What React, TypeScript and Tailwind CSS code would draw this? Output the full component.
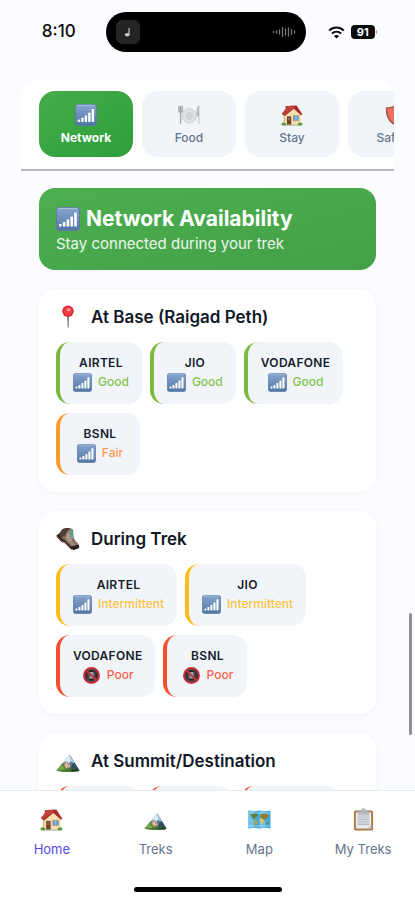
import { useState } from 'react'
import type { ComponentType } from 'react'
import clsx from 'clsx'

interface IconProps {
  className?: string
}

function SignalIcon({ className }: IconProps) {
  return (
    <svg viewBox="0 0 24 24" className={className} aria-hidden="true">
      <defs>
        <linearGradient id="signal-bg" x1="0" y1="0" x2="0" y2="1">
          <stop offset="0" stopColor="#87a5d0" />
          <stop offset="0.5" stopColor="#6c8fba" />
          <stop offset="1" stopColor="#4f76a3" />
        </linearGradient>
      </defs>
      <rect x="0.5" y="0.5" width="23" height="23" rx="3" fill="url(#signal-bg)" stroke="#5d7ba6" />
      <path d="M2.5 1.4h19" stroke="#b9cde8" strokeWidth="0.8" />
      <g fill="#fff">
        <rect x="3" y="17" width="2.6" height="2.5" rx="0.6" />
        <rect x="6.8" y="15" width="2.6" height="4.5" rx="0.6" />
        <rect x="10.6" y="12.5" width="2.6" height="7" rx="0.6" />
        <rect x="14.4" y="9.5" width="2.6" height="10" rx="0.6" />
        <rect x="18.2" y="5.5" width="2.6" height="14" rx="0.6" />
      </g>
    </svg>
  )
}

function PlateIcon({ className }: IconProps) {
  return (
    <svg viewBox="0 0 24 24" className={className} aria-hidden="true">
      <circle cx="12.5" cy="12.8" r="8" fill="#dcdfe2" stroke="#c9cdd1" strokeWidth="0.7" />
      <circle cx="12.5" cy="12.8" r="5.2" fill="#d1d4d8" stroke="#e9ebed" strokeWidth="0.8" />
      <path d="M1 2v6.5h3.6V2M2.8 2v19.5" fill="none" stroke="#a5a8ab" strokeWidth="1.5" />
      <path d="M22.8 21.5V2c-2 1.5-2.5 6-2 10.5h2" fill="#c1c4c7" stroke="#a9acaf" strokeWidth="0.8" />
    </svg>
  )
}

function HouseIcon({ className }: IconProps) {
  return (
    <svg viewBox="0 0 24 24" className={className} aria-hidden="true">
      <path d="M5 2.2h3.5v5H5z" fill="#9c4436" />
      <path d="M3 11.5 9.5 5l4-1.5 8 8.500v10.5H3z" fill="#f5dfb1" />
      <path d="M3 12v10.5h1.6V12z" fill="#d9b984" />
      <path d="M.8 10.8 7.6 2.2 17 1.6l6.3 9.6-1.5 1L14 5.2 4.200 13z" fill="#a92b2b" />
      <path d="m7.6 2.2-6 8 2 1.4L14 4.3l-.8-2.4z" fill="#c24337" />
      <rect x="6.5" y="13.5" width="4.6" height="9" fill="#70402d" />
      <rect x="7.7" y="14.8" width="2.2" height="3" fill="#a46b4b" />
      <rect x="13.4" y="12.7" width="6" height="5.6" fill="#5aa3dc" stroke="#c29164" strokeWidth="0.8" />
      <path d="M16.4 12.7v5.6" stroke="#cde4f3" strokeWidth="0.6" />
      <ellipse cx="3" cy="21.8" rx="2.6" ry="1.7" fill="#5d9b3c" />
      <ellipse cx="21" cy="21.8" rx="2.6" ry="1.7" fill="#5d9b3c" />
      <path d="M3 23h18" stroke="#81905c" strokeWidth="0.8" />
    </svg>
  )
}

function ShieldIcon({ className }: IconProps) {
  return (
    <svg viewBox="0 0 24 24" className={className} aria-hidden="true">
      <path d="M12 1c3 2 6 2.5 10 2.5C22.5 12 20 19.5 12 23.5 4 19.5 1.500 12 2 3.5 6 3.5 9 3 12 1z" fill="#a8584e" />
      <path d="M12 3.2c2.5 1.5 5 2 8 2.1.1 6.7-2 12.7-8 16-6-3.3-8.1-9.3-8-16 3-.1 5.500-.6 8-2.1z" fill="#ee6557" />
      <path d="M12 3.2v18.1c-6-3.3-8.1-9.3-8-16 3-.1 5.500-.6 8-2.1z" fill="#f2705f" />
    </svg>
  )
}

function PinIcon({ className }: IconProps) {
  return (
    <svg viewBox="0 0 24 24" className={className} aria-hidden="true">
      <path d="M11.1 9h2l-.5 13.5h-1z" fill="#807b82" />
      <circle cx="12" cy="6.3" r="5.7" fill="#d92332" />
      <circle cx="12" cy="6.3" r="4.2" fill="#ee3d43" />
      <ellipse cx="12.8" cy="4.8" rx="2" ry="1.5" fill="#ff9d96" />
    </svg>
  )
}

function BootIcon({ className }: IconProps) {
  return (
    <svg viewBox="0 0 24 24" className={className} aria-hidden="true">
      <path d="M1 8C4 7 5 3 7.500 1.800 10 .6 14 1 17 2.500c.6 3.500.2 6.500 1.200 9.500 1.500 3 4.300 4 4.800 6.500l-.5 2.500-5 1.500c-3-1-4.500-3.500-6-5.500C9.500 14.500 8 14 6 13z" fill="#846c5e" />
      <path d="M1 8C4 7 5 3 7.500 1.800 9.500.9 12 .8 14 1.300 12 3 10.500 5.500 9.500 8L5 11z" fill="#4d3f38" />
      <path d="M10 9c1-3 2.500-5.500 4-6.500l.8 9.500 4.700 5.500-2 1.500c-3-1.500-5-4-7.500-6z" fill="#a18877" />
      <path d="M14 3.200 16.500 3l1 8.500-2 .8z" fill="#4fae9f" />
      <path d="m10.800 7.500 3.400 1M10.500 10.500l4.500.3M12 13.500l4-1" stroke="#d8c0aa" strokeWidth="0.8" />
      <path d="M.7 8 2.500 7.500 6.500 12l2.700 1.500 5.600 6 7.900-1.800.6 3.300-5.300 2-3-.7-6.500-6.500-3-.8L.7 10z" fill="#2a2423" />
      <path d="m1.200 9.300 4.600 5 3 .8 5.200 6.100" fill="none" stroke="#be5843" strokeWidth="0.8" />
    </svg>
  )
}

function MountainIcon({ className }: IconProps) {
  return (
    <svg viewBox="0 0 24 24" className={className} aria-hidden="true">
      <path d="M4 18 13.5 5.5l10 16H4z" fill="#557c99" />
      <path d="m13.5 5.5-6 8 3.5-1 1.8 2 2-2.5 3 2.5 1.500-.3z" fill="#dcebf3" />
      <path d="m13.5 5.5 10 16H14l2.5-7z" fill="#334f63" />
      <path d="m13.5 5.5 5.2 8.3-2.2.2-1.5-2z" fill="#a5c9dc" />
      <path d="m5 19.5 5.500-7.500 3 3 1.500 5.5z" fill="#b99475" />
      <path d="m9 16 1.7-3 1.300 4-1.500 2zM13 15l1.8 5-2.3-.5z" fill="#e5c4a4" />
      <path d="m.5 21.500 6-7.500 3.5 6 4-2 3 2.5 3-2 3.500 3.500C18 23.500 6 23.500.5 21.500z" fill="#477734" />
      <path d="m.8 21.300 5.500-6.500 2.500 6z" fill="#74a548" />
      <path d="m14 22 2-2 2 1 2-2 3.500 2.800c-3 .8-6 .9-9.500.2z" fill="#233d2e" />
    </svg>
  )
}

function MapIcon({ className }: IconProps) {
  return (
    <svg viewBox="0 0 24 24" className={className} aria-hidden="true">
      <path d="m.5 2.500 5.700 1L12 2.500l5.800 1 5.700-1v19l-5.700-1-5.800 1-5.800-1-5.700 1z" fill="#45a9dc" />
      <path d="m.5 2.500 5.700 1v17l-5.700 1zM12 2.500l5.800 1v17l-5.800 1z" fill="#6cc2e8" />
      <path d="M1.500 5.200h21M1.500 18.800h21" stroke="#a9dff2" strokeWidth="0.8" />
      <path d="m2.500 6.500 4.500-.8 3.500.8-1 2.500-2 1.200-.8 1.800-2-1-1.200-2.500z" fill="#5f8038" />
      <path d="m7 12 3 1.300-.6 3-1.600 2.700-1-3z" fill="#c39a3d" />
      <path d="m12.500 7.500 2-1.800 4 .4 3 1-.5 3-2.500 1-1.500 2-1.500-2-2-.4-1-1.500z" fill="#8f7f30" />
      <path d="m12 11.500 3-.3 1.500 1.500-1.300 4-1.200.8-1-3.500z" fill="#e8c84f" />
      <path d="m19 15.500 2.300-.7.5 2-2.200.5z" fill="#5b8d44" />
    </svg>
  )
}

function ClipboardIcon({ className }: IconProps) {
  return (
    <svg viewBox="0 0 24 24" className={className} aria-hidden="true">
      <rect x="2" y="2.5" width="20" height="21" rx="1.8" fill="#a97b43" />
      <path d="M4 4.500h16v17H4z" fill="#e6e9ec" />
      <path d="M5.800 7h12.400M5.800 9.500h12.400M5.800 12h12.400M5.800 14.500h12.400M5.800 17h12.400" stroke="#b8bcc2" strokeWidth="1.4" />
      <path d="M16 21.500h4v-4z" fill="#c5c9ce" />
      <path d="M7 5.500V3.200h2.800c.2-3.600 4.200-3.600 4.400 0H17v2.300z" fill="#b2b7bd" stroke="#91979e" strokeWidth="0.5" />
    </svg>
  )
}

function NoPhoneIcon({ className }: IconProps) {
  return (
    <svg viewBox="0 0 24 24" className={className} aria-hidden="true">
      <circle cx="12" cy="12" r="9.500" fill="#3c3335" stroke="#cc2f35" strokeWidth="2.4" />
      <rect x="8" y="5" width="8" height="14" rx="1.5" fill="#1e2126" stroke="#777b80" strokeWidth="0.7" />
      <path d="M9.300 7.500h5.400v8.500H9.300z" fill="#9aa1a8" />
      <path d="m5.500 5.500 13 13" stroke="#cc2f35" strokeWidth="2.2" />
    </svg>
  )
}

function WifiIcon({ className }: IconProps) {
  return (
    <svg viewBox="0 0 17 13" className={className} aria-hidden="true">
      <path d="M1.200 4.600c4.200-4 10.400-4 14.600 0M3.900 7.600c2.700-2.500 6.500-2.500 9.200 0" fill="none" stroke="#0b0b0d" strokeWidth="2" />
      <path d="M8.500 12.500 5.900 9.900c1.500-1.300 3.700-1.300 5.200 0z" fill="#0b0b0d" />
    </svg>
  )
}

const CATEGORIES: { label: string; Icon: ComponentType<IconProps> }[] = [
  { label: 'Network', Icon: SignalIcon },
  { label: 'Food', Icon: PlateIcon },
  { label: 'Stay', Icon: HouseIcon },
  { label: 'Safety', Icon: ShieldIcon },
]

type Quality = 'Good' | 'Fair' | 'Intermittent' | 'Poor'

const QUALITY_STYLES: Record<Quality, { border: string; text: string }> = {
  Good: { border: 'border-[#7cb93e]', text: 'text-[#82c44c]' },
  Fair: { border: 'border-[#ff9a2e]', text: 'text-[#ff9a4d]' },
  Intermittent: { border: 'border-[#fbbc1c]', text: 'text-[#fbc244]' },
  Poor: { border: 'border-[#f4502c]', text: 'text-[#f9604a]' },
}

interface Spot {
  title: string
  Icon: ComponentType<IconProps>
  carriers: { name: string; quality: Quality }[]
}

const SPOTS: Spot[] = [
  {
    title: 'At Base (Raigad Peth)',
    Icon: PinIcon,
    carriers: [
      { name: 'AIRTEL', quality: 'Good' },
      { name: 'JIO', quality: 'Good' },
      { name: 'VODAFONE', quality: 'Good' },
      { name: 'BSNL', quality: 'Fair' },
    ],
  },
  {
    title: 'During Trek',
    Icon: BootIcon,
    carriers: [
      { name: 'AIRTEL', quality: 'Intermittent' },
      { name: 'JIO', quality: 'Intermittent' },
      { name: 'VODAFONE', quality: 'Poor' },
      { name: 'BSNL', quality: 'Poor' },
    ],
  },
  {
    title: 'At Summit/Destination',
    Icon: MountainIcon,
    carriers: [
      { name: 'AIRTEL', quality: 'Poor' },
      { name: 'JIO', quality: 'Poor' },
      { name: 'VODAFONE', quality: 'Poor' },
    ],
  },
]

const NAV_ITEMS: { label: string; href: string; Icon: ComponentType<IconProps> }[] = [
  { label: 'Home', href: '#home', Icon: HouseIcon },
  { label: 'Treks', href: '#treks', Icon: MountainIcon },
  { label: 'Map', href: '#map', Icon: MapIcon },
  { label: 'My Treks', href: '#my-treks', Icon: ClipboardIcon },
]

function StatusBar() {
  return (
    <header className="flex shrink-0 items-center pt-3 pr-4 pb-7 pl-3">
      <div className="flex-1 text-center text-[17px] font-medium text-[#0b0b0d]">8:10</div>
      <div className="flex h-10 w-[200px] items-center justify-between rounded-full bg-black px-[10px]">
        <div className="flex size-6 items-center justify-center rounded-md bg-[#242424]">
          <svg viewBox="0 0 10 14" className="h-3 w-2" aria-hidden="true">
            <ellipse cx="4" cy="10.5" rx="3" ry="2.2" fill="#c9c9c9" />
            <path d="M6.300 10.500V2" stroke="#c9c9c9" strokeWidth="1.5" />
          </svg>
        </div>
        <svg viewBox="0 0 24 12" className="h-3 w-6" aria-hidden="true">
          <path
            d="M1.500 5.500v1M4.500 5v2M7.500 4v4M10.500 1.500v9M13.500 3v6M16.500 2v8M19.500 3.500v5M22.500 5v2"
            stroke="#77777a"
            strokeWidth="1.3"
            strokeLinecap="round"
          />
        </svg>
      </div>
      <div className="flex flex-1 items-center justify-center gap-1.5">
        <WifiIcon className="h-[13px] w-[17px]" />
        <div className="flex items-center gap-px">
          <span className="flex h-[14px] w-6 items-center justify-center rounded bg-[#0b0b0d] text-[11px] font-bold text-white">
            91
          </span>
          <span className="h-1 w-px rounded-r bg-gray-400" />
        </div>
      </div>
    </header>
  )
}

function CarrierChip({ name, quality }: { name: string; quality: Quality }) {
  const { border, text } = QUALITY_STYLES[quality]
  const Icon = quality === 'Poor' ? NoPhoneIcon : SignalIcon

  return (
    <li
      className={clsx(
        'flex min-w-[84px] flex-col items-center rounded-[14px] border-l-4 bg-[#f1f5f9] px-[13px] py-3',
        border
      )}
    >
      <span className="text-xs leading-[18px] font-semibold tracking-wide text-[#141b2c]">{name}</span>
      <span className="flex items-center gap-1.5">
        <Icon className="size-[19px]" />
        <span className={clsx('text-xs leading-5 font-medium', text)}>{quality}</span>
      </span>
    </li>
  )
}

function SpotCard({ title, Icon, carriers }: Spot) {
  return (
    <section className="rounded-2xl bg-white px-[17px] pt-4 pb-[17px] shadow-[0_1px_6px_rgba(15,23,42,0.04)]">
      <h2 className="flex items-center gap-[11px] text-[17px] leading-[22px] font-semibold text-[#111827]">
        <Icon className="size-6" />
        {title}
      </h2>
      <ul className="mt-[13px] flex flex-wrap gap-x-2 gap-y-[9px]">
        {carriers.map(c => (
          <CarrierChip key={c.name} {...c} />
        ))}
      </ul>
    </section>
  )
}

export default function App() {
  const [category, setCategory] = useState('Network')

  return (
    <div className="relative flex h-screen flex-col overflow-hidden bg-[#fbfcff] font-['Inter',sans-serif]">
      <StatusBar />

      <main className="mx-[21px] flex min-h-0 flex-1 flex-col">
        {/* Category tabs, scroll sideways */}
        <div className="flex shrink-0 gap-[9px] overflow-x-auto rounded-t-2xl border-b-2 border-[#b8b8ba] bg-white px-[18px] pt-[11px] pb-3 [scrollbar-width:none]">
          {CATEGORIES.map(({ label, Icon }) => (
            <button
              key={label}
              onClick={() => setCategory(label)}
              className={clsx(
                'flex h-[66px] w-[94px] shrink-0 cursor-pointer flex-col items-center justify-center gap-1 rounded-2xl pt-0.5 text-xs leading-4',
                category === label
                  ? 'bg-linear-to-br from-[#43ad48] to-[#2f9e3b] font-bold text-white'
                  : 'bg-[#f1f5f9] font-medium text-[#64748b]'
              )}
            >
              <Icon className="size-[22px]" />
              {label}
            </button>
          ))}
        </div>

        <div className="flex min-h-0 flex-1 flex-col gap-[19px] overflow-y-auto px-[18px] pt-[17px] [scrollbar-width:none] *:shrink-0">
          <div className="rounded-2xl bg-linear-to-br from-[#4caf50] to-[#43a047] px-[17px] pt-[17px] pb-4 text-white">
            <h1 className="flex items-center gap-1.5 text-[21px] leading-7 font-bold">
              <SignalIcon className="size-6" />
              Network Availability
            </h1>
            <p className="mt-px text-[15px] leading-5 text-white/90">Stay connected during your trek</p>
          </div>

          {SPOTS.map(spot => (
            <SpotCard key={spot.title} {...spot} />
          ))}
        </div>
      </main>

      {/* Scroll thumb */}
      <div className="absolute top-[613px] right-[3px] h-[122px] w-[3px] rounded-full bg-[#8f9092]" />

      <footer className="shrink-0 border-t border-[#e6ebf1] bg-white">
        <nav className="grid grid-cols-4 pt-[17px] pb-7">
          {NAV_ITEMS.map(({ label, href, Icon }) => (
            <a
              key={label}
              href={href}
              className={clsx(
                'flex flex-col items-center gap-2 text-[13px] leading-5',
                label === 'Home' ? 'text-[#5548e8]' : 'text-[#64748b]'
              )}
            >
              <Icon className="size-[23px]" />
              {label}
            </a>
          ))}
        </nav>
        <div className="mx-auto mb-2 h-[5px] w-[148px] rounded-full bg-black" />
      </footer>
    </div>
  )
}
